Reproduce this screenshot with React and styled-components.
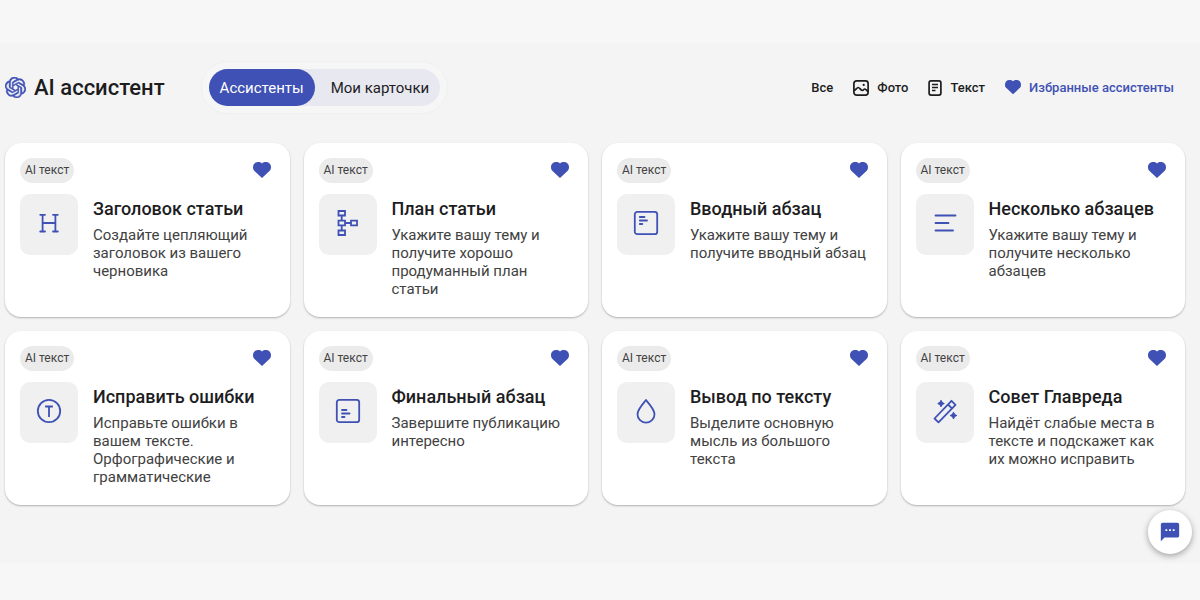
import React, { useState } from "react";
import styled, { createGlobalStyle } from "styled-components";
import { SiOpenai } from "react-icons/si";
import { MdSms } from "react-icons/md";

const GlobalStyle = createGlobalStyle`
  :root {
    --primary: #3f51b5;
    --text: #1d1d1f;
    --text-secondary: #424242;
    --band: #f4f4f4;
    --chip: #ebebeb;
    --tile: #f0f0f0;
    --white: #ffffff;
  }

  * {
    box-sizing: border-box;
  }

  body {
    margin: 0;
    background-color: #f7f7f7;
    color: var(--text);
    font-family: Roboto, "Noto Sans", sans-serif;
  }

  button {
    border: none;
    background: none;
    padding: 0;
    font-family: inherit;
    color: inherit;
    cursor: pointer;
  }
`;

const Page = styled.div`
  padding: 43px 0 37px;
`;

const Main = styled.main`
  min-height: calc(100vh - 80px);
  padding: 18px 15px 40px 5px;
  background-color: var(--band);
`;

const Header = styled.header`
  display: flex;
  align-items: center;
  flex-wrap: wrap;
  margin-bottom: 29px;
`;

const Brand = styled.div`
  display: flex;
  align-items: center;
  gap: 8px;
  color: var(--primary);
`;

const Logo = styled(SiOpenai)`
  stroke: currentColor;
  stroke-width: 0.6px;
`;

const BrandTitle = styled.h1`
  margin: 0;
  font-size: 22px;
  line-height: 28px;
  font-weight: 500;
  color: var(--text);
`;

const TabsFrame = styled.div`
  margin-left: 36px;
  padding: 7px;
  border: 1px solid #f0f0f0;
  border-radius: 27px;
  background-color: #f6f6f6;
`;

const Tabs = styled.div`
  display: flex;
  border-radius: 19px;
  background-color: #e8e8f0;
`;

const Tab = styled.button`
  height: 37px;
  padding: ${({ $active }) => ($active ? "0 11px" : "0 11px 0 16px")};
  border-radius: 19px;
  font-size: 15px;

  && {
    background-color: ${({ $active }) => ($active ? "var(--primary)" : "transparent")};
    color: ${({ $active }) => ($active ? "var(--white)" : "var(--text)")};
  }
`;

const Filters = styled.nav`
  display: flex;
  align-items: center;
  gap: 20px;
  margin-left: auto;
  padding-right: 11px;
`;

const FilterButton = styled.button`
  display: flex;
  align-items: center;
  gap: 8px;
  font-size: 13px;
  line-height: 20px;
  font-weight: 500;

  && {
    color: ${({ $active }) => ($active ? "var(--primary)" : "var(--text)")};
  }
`;

const CardGrid = styled.section`
  display: grid;
  grid-template-columns: repeat(4, minmax(0, 1fr));
  grid-auto-rows: 1fr;
  gap: 14px;
`;

const Card = styled.article`
  padding: 15px 19px 19px 15px;
  border-radius: 16px;
  background-color: var(--white);
  box-shadow: 0 1px 2px rgba(0, 0, 0, 0.28);
`;

const CardTop = styled.div`
  display: flex;
  align-items: center;
  justify-content: space-between;
  margin-bottom: 11px;
`;

const Chip = styled.span`
  padding: 0 5px;
  border-radius: 13px;
  background-color: var(--chip);
  color: var(--text-secondary);
  font-size: 12px;
  line-height: 25px;
`;

const FavoriteButton = styled.button`
  display: flex;

  && {
    color: var(--primary);
  }
`;

const CardBody = styled.div`
  display: flex;
  align-items: flex-start;
  gap: 15px;
`;

const IconTile = styled.div`
  display: flex;
  flex: none;
  align-items: center;
  justify-content: center;
  width: 58px;
  height: 61px;
  padding-bottom: 3px;
  border-radius: 10px;
  background-color: var(--tile);
  color: var(--primary);
`;

const CardText = styled.div`
  min-width: 0;
  padding-top: 3px;
`;

const CardTitle = styled.h2`
  margin: 0 0 5px;
  font-size: 18px;
  line-height: 24px;
  font-weight: 500;
`;

const CardDescription = styled.p`
  margin: 0;
  color: var(--text-secondary);
  font-size: 15px;
  line-height: 18px;
`;

const ChatButton = styled.button`
  position: fixed;
  right: 8px;
  bottom: 46px;
  display: flex;
  align-items: center;
  justify-content: center;
  width: 44px;
  height: 44px;
  border-radius: 50%;

  && {
    background-color: var(--white);
    color: var(--primary);
    box-shadow: 0 2px 6px rgba(0, 0, 0, 0.35);
  }
`;

function Stroke({ children }) {
  return (
    <svg
      width="28"
      height="28"
      viewBox="0 0 28 28"
      fill="none"
      stroke="currentColor"
      strokeWidth="1.8"
      strokeLinecap="round"
      strokeLinejoin="round"
      aria-hidden="true"
    >
      {children}
    </svg>
  );
}

function Heart({ width }) {
  return (
    <svg width={width} viewBox="0 0 19 17" fill="currentColor" aria-hidden="true">
      <path d="M9.5 17 1.6 9.6C.5 8.5 0 7.100 0 5.500 0 2.300 2.200 0 5.300 0c1.700 0 3.200.5 4.200 1.500C10.500.5 12 0 13.700 0 16.800 0 19 2.300 19 5.500c0 1.600-.5 3-1.600 4.100z" />
    </svg>
  );
}

function PhotoIcon() {
  return (
    <svg width="16" height="16" viewBox="0 0 16 16" fill="none" stroke="currentColor" strokeWidth="1.7" strokeLinejoin="round" aria-hidden="true">
      <rect x="0.9" y="0.9" width="14.2" height="14.2" rx="2.6" />
      <path d="M1 10.500C3 9.500 4 7.500 5.300 7.500s2.500 3 4.200 3c1 0 1.200-1.500 2.200-1.500s2 1.700 3.500 2.500" />
      <circle cx="10.7" cy="4.900" r="1.100" fill="currentColor" stroke="none" />
    </svg>
  );
}

function TextIcon() {
  return (
    <svg width="14" height="16" viewBox="0 0 14 16" fill="none" stroke="currentColor" strokeWidth="1.7" aria-hidden="true">
      <rect x="1.100" y="0.9" width="11.8" height="14.2" rx="2" />
      <path d="M4 4.500h6M4 7.500h6M4 10.500h3.500" strokeWidth="1.400" />
    </svg>
  );
}

const icons = {
  heading: (
    <Stroke>
      <path d="M5.200 5.800h4.800M18 5.800h4.800M5.200 22.500h4.800M18 22.500h4.800M7.600 5.800v16.700M20.400 5.800v16.700M7.600 14h12.800" />
    </Stroke>
  ),
  plan: (
    <Stroke>
      <g strokeLinejoin="miter" strokeLinecap="butt">
        <path d="M4.500 2h6.500v4.500H4.500zM4.500 11.700h6.500v4.600H4.500zM4.500 21.500h6.500V26H4.500zM17 11.700h6v4.600h-6z" />
        <path d="M7.700 6.500v5.200M7.700 16.300v5.200M11 14h6" />
      </g>
    </Stroke>
  ),
  intro: (
    <Stroke>
      <rect x="2.800" y="2.800" width="22.400" height="22.400" rx="2.500" />
      <path d="M7.800 8h4.700M7.800 11.500h7.200M7.800 15h2.500" />
    </Stroke>
  ),
  lines: (
    <Stroke>
      <path d="M4.500 6.500h20M4.500 14h13M4.500 21.500h17.500" />
    </Stroke>
  ),
  fix: (
    <Stroke>
      <circle cx="14" cy="14" r="11.200" />
      <path d="M11 9.500h6M14 9.500V19" strokeLinecap="square" />
    </Stroke>
  ),
  final: (
    <Stroke>
      <rect x="2.800" y="2.800" width="22.400" height="22.400" rx="2.500" />
      <path d="M8 13h4.500M8 16.500h7.500M8 20h2.500" />
    </Stroke>
  ),
  drop: (
    <Stroke>
      <path d="M14 3c-1 1.500-8.500 9-8.500 14.200a8.500 8.500 0 0 0 17 0C22.500 12 15 4.500 14 3z" />
    </Stroke>
  ),
  wand: (
    <Stroke>
      <path d="M3.500 21.500 20.500 3.800l4 4L7.500 25.300zM17 7.500l4 3.800" />
      <path
        d="M10 3.500q.6 2.400 3 3-2.400.6-3 3-.6-2.400-3-3 2.400-.6 3-3zM22.500 15.500q.6 2.400 3 3-2.400.6-3 3-.6-2.400-3-3 2.400-.6 3-3z"
        fill="currentColor"
        strokeWidth="1.2"
      />
    </Stroke>
  ),
};

const assistants = [
  { icon: "heading", title: "Заголовок статьи", text: "Создайте цепляющий заголовок из вашего черновика" },
  { icon: "plan", title: "План статьи", text: "Укажите вашу тему и получите хорошо продуманный план статьи" },
  { icon: "intro", title: "Вводный абзац", text: "Укажите вашу тему и получите вводный абзац" },
  { icon: "lines", title: "Несколько абзацев", text: "Укажите вашу тему и получите несколько абзацев" },
  { icon: "fix", title: "Исправить ошибки", text: "Исправьте ошибки в вашем тексте. Орфографические и грамматические" },
  { icon: "final", title: "Финальный абзац", text: "Завершите публикацию интересно" },
  { icon: "drop", title: "Вывод по тексту", text: "Выделите основную мысль из большого текста" },
  { icon: "wand", title: "Совет Главреда", text: "Найдёт слабые места в тексте и подскажет как их можно исправить" },
];

const tabs = ["Ассистенты", "Мои карточки"];

const filters = [
  { label: "Все" },
  { label: "Фото", icon: <PhotoIcon /> },
  { label: "Текст", icon: <TextIcon /> },
  { label: "Избранные ассистенты", icon: <Heart width={16} /> },
];

function AssistantCard({ icon, title, text }) {
  return (
    <Card>
      <CardTop>
        <Chip>AI текст</Chip>
        <FavoriteButton type="button" aria-label={`Убрать из избранного: ${title}`}>
          <Heart width={18} />
        </FavoriteButton>
      </CardTop>
      <CardBody>
        <IconTile>{icons[icon]}</IconTile>
        <CardText>
          <CardTitle>{title}</CardTitle>
          <CardDescription>{text}</CardDescription>
        </CardText>
      </CardBody>
    </Card>
  );
}

function App() {
  const [tab, setTab] = useState("Ассистенты");
  const [filter, setFilter] = useState("Избранные ассистенты");

  return (
    <Page>
      <GlobalStyle />
      <Main>
        <Header>
          <Brand>
            <Logo size={21} />
            <BrandTitle>AI ассистент</BrandTitle>
          </Brand>
          <TabsFrame>
            <Tabs>
              {tabs.map((name) => (
                <Tab key={name} type="button" $active={name === tab} onClick={() => setTab(name)}>
                  {name}
                </Tab>
              ))}
            </Tabs>
          </TabsFrame>
          <Filters>
            {filters.map(({ label, icon }) => (
              <FilterButton key={label} type="button" $active={label === filter} onClick={() => setFilter(label)}>
                {icon}
                {label}
              </FilterButton>
            ))}
          </Filters>
        </Header>
        <CardGrid>
          {assistants.map((item) => (
            <AssistantCard key={item.title} {...item} />
          ))}
        </CardGrid>
      </Main>
      <ChatButton type="button" aria-label="Открыть чат">
        <MdSms size={22} />
      </ChatButton>
    </Page>
  );
}

export default App;
